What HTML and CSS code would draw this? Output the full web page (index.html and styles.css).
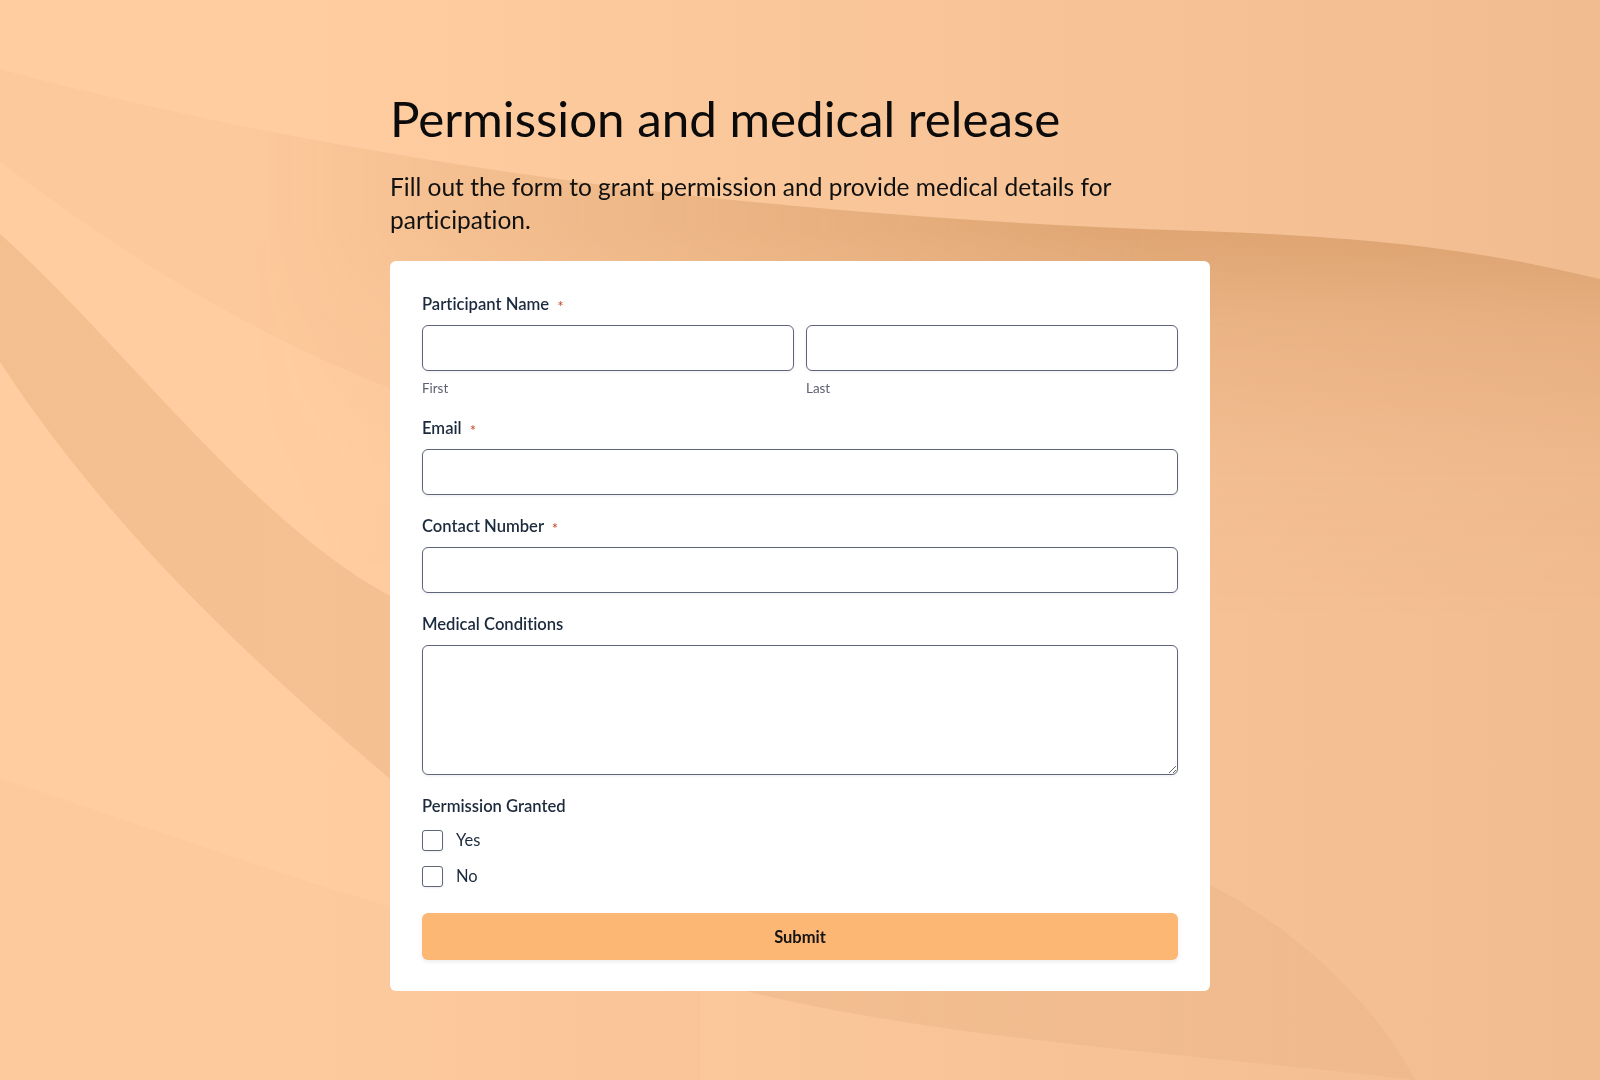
FILE: index.html
```html
<!DOCTYPE html>
<html lang="en">
<head>
    <meta charset="UTF-8">
    <meta name="viewport" content="width=device-width, initial-scale=1.0">
    <title>Permission and medical release</title>
    <link rel="stylesheet" href="styles.css">
</head>
<body>
    <!-- decorative waves behind the page -->
    <svg class="backdrop" viewBox="0 0 1600 1080" preserveAspectRatio="none" aria-hidden="true">
        <defs>
            <linearGradient id="base" gradientUnits="userSpaceOnUse" x1="300" y1="0" x2="1600" y2="0">
                <stop offset="0" stop-color="#ffcda0"/>
                <stop offset="1" stop-color="#f1bc90"/>
            </linearGradient>
            <linearGradient id="tint" gradientUnits="userSpaceOnUse" x1="700" y1="0" x2="1200" y2="0">
                <stop offset="0" stop-color="#c07c3e" stop-opacity="0.05"/>
                <stop offset="1" stop-color="#c07c3e" stop-opacity="0"/>
            </linearGradient>
            <linearGradient id="shade" gradientUnits="userSpaceOnUse" x1="0" y1="230" x2="0" y2="620">
                <stop offset="0" stop-color="#b06a2a" stop-opacity="0.32"/>
                <stop offset="0.25" stop-color="#b06a2a" stop-opacity="0.15"/>
                <stop offset="0.6" stop-color="#b06a2a" stop-opacity="0.04"/>
                <stop offset="1" stop-color="#b06a2a" stop-opacity="0"/>
            </linearGradient>
            <linearGradient id="hfade" gradientUnits="userSpaceOnUse" x1="250" y1="0" x2="1150" y2="0">
                <stop offset="0" stop-color="#000"/>
                <stop offset="1" stop-color="#fff"/>
            </linearGradient>
            <mask id="fadeLeft">
                <rect width="1600" height="1080" fill="url(#hfade)"/>
            </mask>
            <linearGradient id="band" gradientUnits="userSpaceOnUse" x1="0" y1="0" x2="1400" y2="0">
                <stop offset="0" stop-color="#b8763a" stop-opacity="0.16"/>
                <stop offset="1" stop-color="#b8763a" stop-opacity="0.07"/>
            </linearGradient>
        </defs>
        <rect width="1600" height="1080" fill="url(#base)"/>
        <!-- soft strip under the top curve -->
        <path d="M0,69 C300,150 700,215 1200,231 C1400,238 1500,255 1600,279 L1600,900 L1300,900 C1000,700 700,500 410,396 C260,340 130,260 0,162 Z" fill="url(#tint)"/>
        <path d="M0,69 C300,150 700,215 1200,231 C1400,238 1500,255 1600,279 L1600,1080 L0,1080 Z" fill="url(#shade)" mask="url(#fadeLeft)"/>
        <!-- lower left, slightly darker under the last curve -->
        <path d="M0,778 C130,820 260,870 400,909 L700,991 L700,1080 L0,1080 Z" fill="#c07c3e" fill-opacity="0.03"/>
        <!-- diagonal band that tapers into the bottom right -->
        <path d="M0,234 C120,340 250,520 390,596 C700,760 1000,800 1210,885 C1300,930 1380,1010 1415,1080 C1200,1055 950,1040 753,993 C600,950 450,830 390,779 C250,660 110,530 0,362 Z" fill="url(#band)"/>
    </svg>

    <main class="wrap">
        <h1 class="title">Permission and medical release</h1>
        <p class="intro">Fill out the form to grant permission and provide medical details for participation.</p>

        <form class="card">
            <div class="field">
                <label class="field-label" for="firstName">Participant Name <span class="req">*</span></label>
                <div class="name-row">
                    <div class="name-part">
                        <input type="text" id="firstName" class="text-input">
                        <span class="hint">First</span>
                    </div>
                    <div class="name-part">
                        <input type="text" id="lastName" class="text-input">
                        <span class="hint">Last</span>
                    </div>
                </div>
            </div>

            <div class="field">
                <label class="field-label" for="email">Email <span class="req">*</span></label>
                <input type="email" id="email" class="text-input">
            </div>

            <div class="field">
                <label class="field-label" for="phone">Contact Number <span class="req">*</span></label>
                <input type="tel" id="phone" class="text-input">
            </div>

            <div class="field">
                <label class="field-label" for="conditions">Medical Conditions</label>
                <textarea id="conditions" class="text-area"></textarea>
            </div>

            <div class="field">
                <span class="field-label">Permission Granted</span>
                <div class="choices">
                    <label class="choice"><input type="checkbox" class="check"> Yes</label>
                    <label class="choice"><input type="checkbox" class="check"> No</label>
                </div>
            </div>

            <button type="submit" class="submit">Submit</button>
        </form>
    </main>
</body>
</html>
```

FILE: styles.css
```css
html, body {
    margin: 0;
    height: 100%;
}
body {
    font-family: Lato, "Open Sans", sans-serif;
    font-variant-ligatures: none;
    color: #0d0d0d;
    background-color: #fbc99c;
    overflow: hidden;
}
.backdrop {
    position: fixed;
    top: 0;
    left: 0;
    width: 100%;
    height: 100%;
    z-index: -1;
}
.wrap {
    width: 820px;
    margin: 0 auto;
    padding-top: 89px;
}
.title {
    margin: 0;
    font-size: 49.3px;
    font-weight: 400;
    line-height: 58px;
    color: #0b0b0b;
}
.intro {
    margin: 23px 0 25px;
    font-size: 24.5px;
    line-height: 33px;
    color: #111;
}
.card {
    background: #fff;
    border-radius: 6px;
    padding: 33px 32px 31px;
}
.field {
    margin-bottom: 21px;
}
.field-label {
    display: block;
    font-size: 16.6px;
    line-height: 21px;
    font-weight: 600;
    color: #1c2a3d;
    margin-bottom: 10px;
}
.req {
    display: inline-block;
    color: #c8412a;
    font-size: 15px;
    line-height: 1;
    font-weight: 400;
    margin-left: 4px;
    transform: translateY(2px);
}
.name-row {
    display: flex;
    gap: 12px;
}
.name-part {
    flex: 1;
}
.text-input {
    display: block;
    box-sizing: border-box;
    width: 100%;
    height: 46px;
    padding: 0 12px;
    border: 1px solid #5e6679;
    border-radius: 6px;
    box-shadow: 0 1px 3px rgba(20, 30, 50, 0.08);
    font-family: inherit;
    font-size: 16px;
    background: #fff;
}
.text-area {
    display: block;
    box-sizing: border-box;
    width: 100%;
    height: 130px;
    padding: 10px 12px;
    border: 1px solid #5e6679;
    border-radius: 6px;
    box-shadow: 0 1px 3px rgba(20, 30, 50, 0.08);
    font-family: inherit;
    font-size: 16px;
}
.hint {
    display: block;
    margin-top: 8px;
    font-size: 13.4px;
    line-height: 18px;
    color: #5b6170;
}
.choices {
    display: flex;
    flex-direction: column;
    gap: 14px;
    padding-top: 2px;
}
.choice {
    display: flex;
    align-items: center;
    gap: 13px;
    font-size: 16.5px;
    color: #1c2a3d;
    line-height: 22px;
}
.check {
    appearance: none;
    -webkit-appearance: none;
    margin: 0;
    width: 21px;
    height: 21px;
    border: 1px solid #5e6679;
    border-radius: 3px;
    background: #fff;
    box-shadow: 0 1px 2px rgba(20, 30, 50, 0.08);
}
.submit {
    display: block;
    width: 100%;
    height: 47px;
    margin-top: 26px;
    border: none;
    border-radius: 6px;
    background-color: #fdb775;
    box-shadow: 0 2px 4px rgba(20, 30, 50, 0.08);
    font-family: inherit;
    font-size: 16.5px;
    font-weight: 700;
    color: #141414;
    cursor: pointer;
}
```
